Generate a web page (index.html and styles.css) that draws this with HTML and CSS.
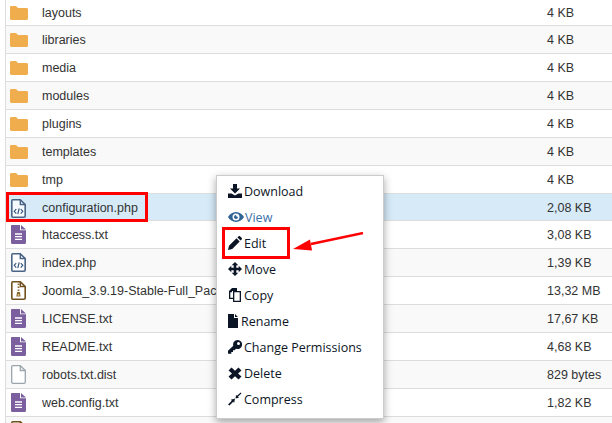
FILE: index.html
```
<!DOCTYPE html>
<html lang="en">
<head>
<meta charset="utf-8">
<title>File manager</title>
<link rel="stylesheet" href="styles.css">
</head>
<body>
<svg class="defs" width="0" height="0" aria-hidden="true">
  <symbol id="folder" viewBox="0 0 18 14"><path d="M1.300 0H6L8 2H16.600C17.400 2 18 2.600 18 3.400V12.600C18 13.400 17.400 14 16.600 14H1.400C.6 14 0 13.400 0 12.600V1.300C0 .6.6 0 1.300 0Z" fill="#f0ad4e"/></symbol>
  <symbol id="text" viewBox="0 0 15 19"><path d="M1 0H9V5.200H15V17.800C15 18.500 14.500 19 13.800 19H1C.4 19 0 18.500 0 17.800V1C0 .4.4 0 1 0ZM10 0L15 4.400H10Z" fill="#7b5f9e"/><path d="M4 9H11M4 11.700H11M4 14.400H11" stroke="#fff" stroke-width="1.300" fill="none"/></symbol>
  <symbol id="code" viewBox="0 0 15 19"><path d="M1.800.8H9.300L14.200 5.500V17C14.200 17.700 13.700 18.200 13 18.200H1.800C1.200 18.200.8 17.700.8 17V2C.8 1.200 1.200.8 1.800.8Z" fill="#fff" fill-opacity=".75" stroke="#4a6485" stroke-width="1.600"/><path d="M9.300 .8V5.500H14.200" fill="none" stroke="#4a6485" stroke-width="1.400"/><path d="M5.300 10L3.200 12.300L5.300 14.600M9.700 10L11.800 12.300L9.700 14.600M8.200 9.400L6.800 15" fill="none" stroke="#2f4f78" stroke-width="1.100"/></symbol>
  <symbol id="zip" viewBox="0 0 15 19"><path d="M1.800.8H9.300L14.200 5.500V17C14.200 17.700 13.700 18.200 13 18.200H1.800C1.200 18.200.8 17.700.8 17V2C.8 1.200 1.200.8 1.800.8Z" fill="#fff" stroke="#70501c" stroke-width="1.600"/><path d="M9.300 .8V5.500H14.200" fill="none" stroke="#70501c" stroke-width="1.400"/><path d="M6.600 2.500H8.400V4H6.600ZM6.600 5.500H8.400V7H6.600ZM6.600 8.500H8.400V10H6.600Z" fill="#8a6a2c"/><path d="M6 11H9L9.600 15.600H5.400Z" fill="#8a6a2c"/><path d="M6.700 13.300H8.300V14.600H6.700Z" fill="#f4e3b8"/></symbol>
  <symbol id="blank" viewBox="0 0 15 19"><path d="M1.800.7H9.300L14.300 5.500V17C14.300 17.700 13.800 18.300 13 18.300H1.800C1.200 18.300.7 17.700.7 17V2C.7 1.200 1.200.7 1.800.7Z" fill="#fff" stroke="#9aa5ad" stroke-width="1.300"/><path d="M9.300 .7V5.500H14.300" fill="none" stroke="#9aa5ad" stroke-width="1.300"/></symbol>
</svg>

<main class="table">
  <div class="row first"><span class="cell-icon"><svg class="i-folder"><use href="#folder"/></svg></span><span class="cell-name">layouts</span><span class="cell-size">4 KB</span></div>
  <div class="row alt"><span class="cell-icon"><svg class="i-folder"><use href="#folder"/></svg></span><span class="cell-name">libraries</span><span class="cell-size">4 KB</span></div>
  <div class="row"><span class="cell-icon"><svg class="i-folder"><use href="#folder"/></svg></span><span class="cell-name">media</span><span class="cell-size">4 KB</span></div>
  <div class="row alt"><span class="cell-icon"><svg class="i-folder"><use href="#folder"/></svg></span><span class="cell-name">modules</span><span class="cell-size">4 KB</span></div>
  <div class="row"><span class="cell-icon"><svg class="i-folder"><use href="#folder"/></svg></span><span class="cell-name">plugins</span><span class="cell-size">4 KB</span></div>
  <div class="row alt"><span class="cell-icon"><svg class="i-folder"><use href="#folder"/></svg></span><span class="cell-name">templates</span><span class="cell-size">4 KB</span></div>
  <div class="row"><span class="cell-icon"><svg class="i-folder"><use href="#folder"/></svg></span><span class="cell-name">tmp</span><span class="cell-size">4 KB</span></div>
  <div class="row selected"><span class="cell-icon"><svg class="i-file"><use href="#code"/></svg></span><span class="cell-name">configuration.php</span><span class="cell-size">2,08 KB</span></div>
  <div class="row"><span class="cell-icon"><svg class="i-file"><use href="#text"/></svg></span><span class="cell-name">htaccess.txt</span><span class="cell-size">3,08 KB</span></div>
  <div class="row alt"><span class="cell-icon"><svg class="i-file"><use href="#code"/></svg></span><span class="cell-name">index.php</span><span class="cell-size">1,39 KB</span></div>
  <div class="row"><span class="cell-icon"><svg class="i-file"><use href="#zip"/></svg></span><span class="cell-name">Joomla_3.9.19-Stable-Full_Package.zip</span><span class="cell-size">13,32 MB</span></div>
  <div class="row alt"><span class="cell-icon"><svg class="i-file"><use href="#text"/></svg></span><span class="cell-name">LICENSE.txt</span><span class="cell-size">17,67 KB</span></div>
  <div class="row"><span class="cell-icon"><svg class="i-file"><use href="#text"/></svg></span><span class="cell-name">README.txt</span><span class="cell-size">4,68 KB</span></div>
  <div class="row alt"><span class="cell-icon"><svg class="i-file"><use href="#blank"/></svg></span><span class="cell-name">robots.txt.dist</span><span class="cell-size">829 bytes</span></div>
  <div class="row"><span class="cell-icon"><svg class="i-file"><use href="#text"/></svg></span><span class="cell-name">web.config.txt</span><span class="cell-size">1,82 KB</span></div>
  <div class="row alt"><span class="cell-icon"><svg class="i-file"><use href="#zip"/></svg></span><span class="cell-name"></span><span class="cell-size"></span></div>
</main>

<div class="mark mark-file"></div>

<nav class="menu">
  <a class="item"><svg class="mi" viewBox="0 0 14 14"><path d="M5 0H9V4.500H12L7 9.500L2 4.500H5ZM0 9.500H3.500L7 11.500L10.500 9.500H14V14H0Z"/></svg>Download</a>
  <a class="item view"><svg class="mi-eye" viewBox="0 0 16 12"><path fill-rule="evenodd" d="M8 1C4.500 1 1.600 3.200 0 6C1.600 8.800 4.500 11 8 11S14.400 8.800 16 6C14.400 3.200 11.500 1 8 1ZM8 2.500A3.500 3.500 0 1 1 8 9.500A3.500 3.500 0 0 1 8 2.500ZM8 4A2 2 0 1 0 10 6C9 6 8 5 8 4Z"/></svg>View</a>
  <a class="item"><svg class="mi" viewBox="0 0 14 14"><path d="M0 14L1 9.800L8.500 2.300L11.700 5.500L4.200 13ZM9.400 1.400L10.400.4C11 -.1 11.700 -.1 12.200.4L13.600 1.800C14.100 2.300 14.100 3 13.600 3.600L12.600 4.600Z"/></svg>Edit</a>
  <a class="item"><svg class="mi" viewBox="0 0 14 14"><path d="M7 0L10.300 3.300H8.300V5.700H10.700V3.700L14 7L10.700 10.300V8.300H8.300V10.700H10.300L7 14L3.700 10.700H5.700V8.300H3.300V10.300L0 7L3.300 3.700V5.700H5.700V3.300H3.700Z"/></svg>Move</a>
  <a class="item"><svg class="mi" viewBox="0 0 14 14"><path fill-rule="evenodd" d="M4 0H9V3H13V14H5V11H1V3ZM2.300 4.300V9.700H5V3H4V4.300ZM6.300 4.300V12.700H11.700V4.300Z"/></svg>Copy</a>
  <a class="item rename"><svg class="mi-file" viewBox="0 0 10 14"><path d="M0 0H6V4H10V14H0ZM7 0L10 3H7Z"/></svg>Rename</a>
  <a class="item"><svg class="mi" viewBox="0 0 14 14"><path fill-rule="evenodd" d="M9.500 0A4.500 4.500 0 1 1 8 8.700L6.500 10.300H5V12H3.300V13.700H0V10.700L5.300 5.800A4.500 4.500 0 0 1 9.500 0ZM10.500 2A1.500 1.500 0 1 0 10.500 5A1.500 1.500 0 0 0 10.500 2Z"/></svg>Change Permissions</a>
  <a class="item"><svg class="mi" viewBox="0 0 14 14"><path d="M3.500 1.500L7 4.800L10.500 1.500L13.500 4.500L10 7.500L13.500 10.500L10.500 13.500L7 10.200L3.500 13.500L.5 10.500L4 7.500L.5 4.500Z"/></svg>Delete</a>
  <a class="item"><svg class="mi" viewBox="0 0 14 14"><path d="M0 12.500L3.800 8.700L2.800 7.700L7 6.500L6.200 10.700L5.200 9.700L1.500 13.500ZM13.500 1.300L10 4.800L11 5.800L7.500 6.500L8 3L9 3.800L12.700 .5Z"/></svg>Compress</a>
</nav>

<div class="mark mark-edit"></div>
<svg class="arrow" viewBox="0 0 72 22" aria-hidden="true"><path d="M70 1L18 12" stroke="#f00" stroke-width="2.400" fill="none"/><path d="M0 17L17 7.500L19 18.500Z" fill="#f00"/></svg>
</body>
</html>
```

FILE: styles.css
```
* { box-sizing: border-box; }
html, body { margin: 0; height: 100%; overflow: hidden; background: #fff; }
body { position: relative; font-family: "Liberation Sans", Arial, sans-serif; }
.defs { position: absolute; }
.table { margin: -3px 0 0 5px; border-left: 1px solid #ddd; }
.row {
  display: flex;
  align-items: center;
  height: 28px;
  border-top: 1px solid #ddd;
  background: #fff;
  font-size: 12.5px;
  color: #333;
}
.row.first { padding-top: 2px; }
.row.alt { background: #f9f9f9; }
.row.selected { height: 27px; padding-top: 2px; background: #d6eaf8; }
.cell-icon { width: 36px; padding-left: 4px; display: flex; align-items: center; }
.cell-name { flex: 1; white-space: nowrap; overflow: hidden; }
.cell-size { width: 60px; margin-right: 5px; white-space: nowrap; }
.i-folder { width: 18px; height: 14px; }
.i-file { width: 15px; height: 19px; margin-left: 1px; }

.menu {
  position: absolute;
  left: 216px;
  top: 175px;
  width: 168px;
  height: 244px;
  padding-top: 2px;
  background: #fff;
  border: 1px solid #ccc;
  box-shadow: 0 3px 8px rgba(0,0,0,.35);
  font-family: "Open Sans", sans-serif;
  font-size: 12.5px;
  color: #0c1526;
}
.item { display: flex; align-items: center; height: 26px; padding-left: 11px; white-space: nowrap; }
.view { color: #3a70a8; }
.mi { width: 14px; height: 14px; margin-right: 2px; fill: #0c1526; flex: none; }
.mi-eye { width: 16px; height: 12px; margin-right: 1px; fill: #2f6494; flex: none; }
.mi-file { width: 10px; height: 14px; margin-right: 3px; fill: #0c1526; flex: none; }

.mark { position: absolute; border: 3px solid #f00; }
.mark-file { left: 6px; top: 192px; width: 142px; height: 30px; }
.mark-edit { left: 222px; top: 227px; width: 68px; height: 32px; }
.arrow { position: absolute; left: 293px; top: 232px; width: 72px; height: 22px; }
```
